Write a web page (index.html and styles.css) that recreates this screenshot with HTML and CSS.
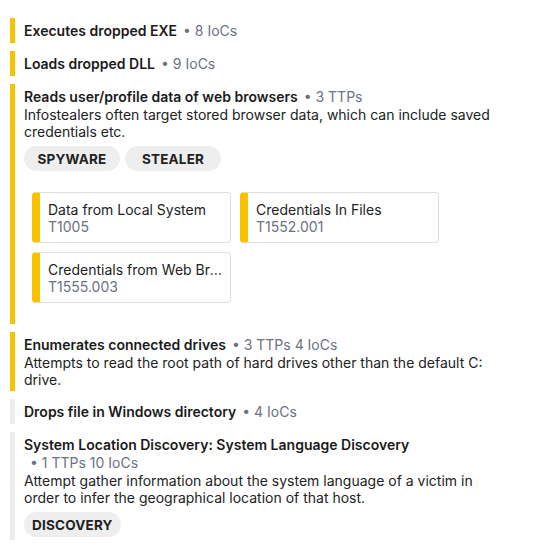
FILE: index.html
```html
<!DOCTYPE html>
<html>
<head>
<meta charset="utf-8">
<link rel="stylesheet" href="styles.css">
</head>
<body>
<div class="list">
  <div class="item sev-high">
    <div class="title">Executes dropped EXE<span class="meta">• 8 IoCs</span></div>
  </div>
  <div class="item sev-high">
    <div class="title">Loads dropped DLL<span class="meta">• 9 IoCs</span></div>
  </div>
  <div class="item sev-high">
    <div class="title">Reads user/profile data of web browsers<span class="meta">• 3 TTPs</span></div>
    <div class="desc">Infostealers often target stored browser data, which can include saved credentials etc.</div>
    <div class="tags"><span class="tag">SPYWARE</span><span class="tag">STEALER</span></div>
    <div class="cards">
      <div class="card"><div class="card-name">Data from Local System</div><div class="card-id">T1005</div></div>
      <div class="card"><div class="card-name">Credentials In Files</div><div class="card-id">T1552.001</div></div>
      <div class="card"><div class="card-name">Credentials from Web Browsers</div><div class="card-id">T1555.003</div></div>
    </div>
  </div>
  <div class="item sev-high">
    <div class="title">Enumerates connected drives<span class="meta">• 3 TTPs 4 IoCs</span></div>
    <div class="desc">Attempts to read the root path of hard drives other than the default C: drive.</div>
  </div>
  <div class="item sev-low">
    <div class="title">Drops file in Windows directory<span class="meta">• 4 IoCs</span></div>
  </div>
  <div class="item sev-low">
    <div class="title">System Location Discovery: System Language Discovery<span class="meta">• 1 TTPs 10 IoCs</span></div>
    <div class="desc">Attempt gather information about the system language of a victim in order to infer the geographical location of that host.</div>
    <div class="tags"><span class="tag">DISCOVERY</span></div>
  </div>
</div>
</body>
</html>
```

FILE: styles.css
```css
* { box-sizing: border-box; }
html, body { margin: 0; padding: 0; background: #ffffff; }
body {
  font-family: Inter, "Liberation Sans", sans-serif;
  font-size: 14px;
  color: #1f1f1f;
}
.list {
  display: flex;
  flex-direction: column;
  gap: 8px;
  padding: 18px 52px 0 10px;
}
.item {
  border-left: 5px solid #f9c200;
  padding: 4px 0 3px 9px;
}
.item.sev-low { border-left-color: #ececec; }
.title {
  font-weight: 600;
  line-height: 18px;
  color: #1a1a1a;
}
.meta {
  display: inline-block;
  margin-left: 6px;
  font-weight: 400;
  color: #6b7280;
  white-space: nowrap;
}
.desc {
  line-height: 17px;
  color: #222;
}
.tags {
  display: flex;
  gap: 5px;
  margin-top: 6px;
}
.tag {
  display: inline-flex;
  align-items: center;
  justify-content: center;
  min-width: 96px;
  height: 25px;
  padding: 0 8px;
  border-radius: 13px;
  background: #eeeeee;
  font-size: 13.5px;
  font-weight: 700;
  color: #222;
  letter-spacing: 0.2px;
}
.cards {
  display: grid;
  grid-template-columns: 199px 199px;
  gap: 9px;
  margin: 21px 0 18px 8px;
}
.card {
  border: 1px solid #dedede;
  border-left: 8px solid #f9c200;
  border-radius: 4px;
  padding: 8px 8px 7px 8px;
  line-height: 17px;
  min-width: 0;
}
.card-name {
  color: #222;
  white-space: nowrap;
  overflow: hidden;
  text-overflow: ellipsis;
}
.card-id { color: #6b7280; }
```
